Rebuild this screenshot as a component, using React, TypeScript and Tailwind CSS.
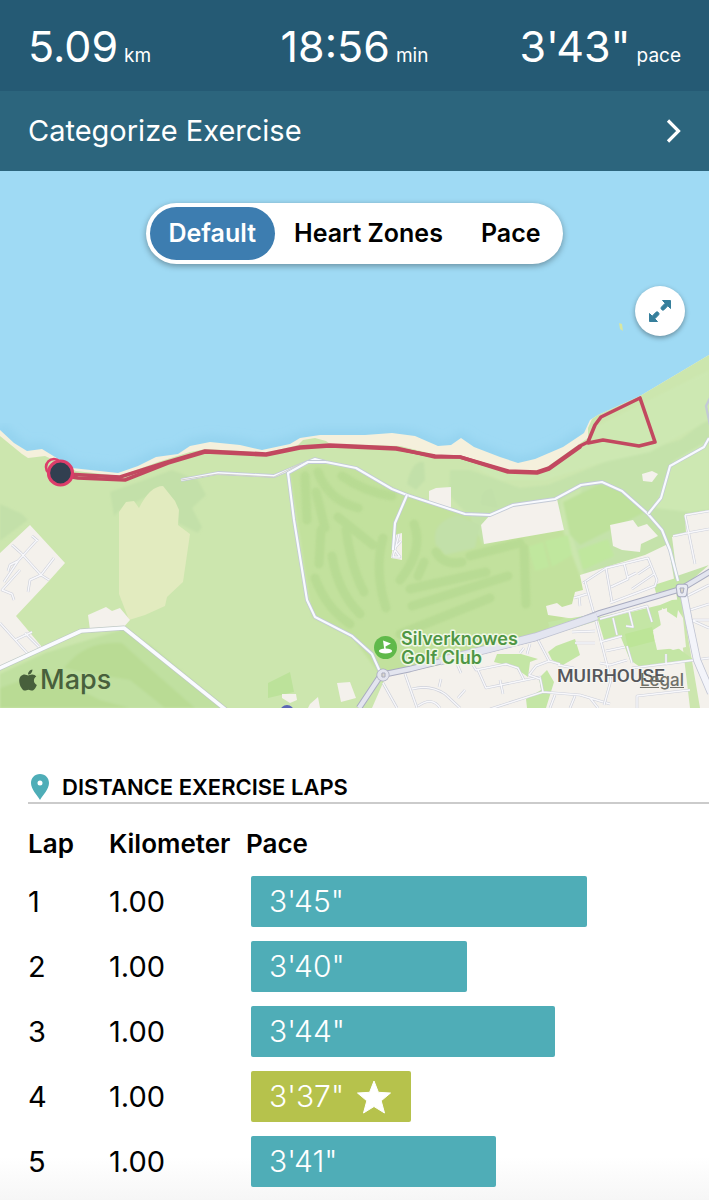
import React, { useState } from "react";
import { FaApple } from "react-icons/fa";

const stats = [
  { value: "5.09", unit: "km" },
  { value: "18:56", unit: "min" },
  { value: "3'43\"", unit: "pace" },
];

const laps = [
  { lap: 1, km: "1.00", pace: "3'45\"", share: 73.4, best: false },
  { lap: 2, km: "1.00", pace: "3'40\"", share: 47.2, best: false },
  { lap: 3, km: "1.00", pace: "3'44\"", share: 66.3, best: false },
  { lap: 4, km: "1.00", pace: "3'37\"", share: 35, best: true },
  { lap: 5, km: "1.00", pace: "3'41\"", share: 53.6, best: false },
];

const modes = ["Default", "Heart Zones", "Pace"];

const fairways = [
  "M305 476L307 520",
  "M316 492L325 528",
  "M318 472Q328 500 358 508",
  "M342 476Q365 492 392 496",
  "M338 517L373 545",
  "M346 530Q352 570 364 592",
  "M321 530L319 564",
  "M332 556Q338 592 360 614",
  "M315 578Q326 608 350 624",
  "M383 538Q374 570 386 608",
  "M414 524Q424 550 400 580",
  "M424 562L418 576",
  "M410 589L486 572",
  "M412 606L508 576",
  "M400 634Q430 622 490 598",
  "M436 552Q444 566 462 562",
  "M470 556L520 543",
  "M524 548L526 604",
];

const minorRoads = [
  "M37 540L18 561L4 582M12 545L21 553L41 575L49 580M18 561L10 565L8 571M54 558L41 575L30 580L28 592M20 570L2 590L12 594L14 600M32 536L38 541",
  "M0 623L28 654M15 640L32 632M25 633L39 647",
  "M399 534L393 557L400 557L394 549L401 541",
  "M405 674L417 708M383 683L397 708",
  "M412 689Q430 684 445 694L460 708M441 679L439 687M465 690L458 698M453 655L461 673M418 706Q432 696 440 708",
  "M478 670L486 688L540 677L543 692L490 709M500 680L503 694M470 660L476 670L506 664L518 668L524 680M543 692L580 695L610 704M555 695L550 708M575 696L570 708M590 698L598 708",
  "M536 636L549 661L536 666L529 675L540 679M549 661L560 664M558 665L574 668",
  "M595 617L606 661L611 680L604 705M600 642L622 636M600 663L610 665L627 660",
  "M613 618L617 635M600 619L647 606L652 622M629 611L633 627L626 626M575 643H595M572 632L595 631M627 646L632 663M606 651L625 647M666 654V664L709 658M632 668L694 660",
  "M583 583L606 568L648 558L657 580L655 586L610 603M606 568L612 602M624 563L628 579L611 587M654 574L632 589M650 566L638 574M628 577L636 573",
  "M585 581L594 614M574 598L587 594M579 596L580 606",
  "M673 536L687 533M685 515L695 564M685 515L709 511M687 533L709 529",
  "M687 596L709 585M690 610L709 604M693 620L709 620M691 620L709 628",
  "M524 648L520 653M530 644L527 654",
  "M637 708V696L690 690",
];

const coastRoad =
  "M181 480L218 473L274 476L315 459L326 462L356 468L392 489L407 495L465 514L490 515L513 505L555 499L581 485L602 482L622 491L648 514L662 530L670 550L678 581";
const clubRoad = "M326 462H308L288 473L294 520L307 600L315 617L352 636L372 654L381 674";
const linkRoads = "M407 495L395 523L393 550M648 514L661 498L670 466L704 447L709 438";
const westRoad = "M-2 669L81 631L124 628L226 710";
const mainRoad = "M359 708L381 675L410 669L535 638L600 613L681 589L711 571";
const southRoad = "M683 591L689 622L697 660L711 693";

function RouteMap() {
  return (
    <svg
      viewBox="0 171 709 537"
      preserveAspectRatio="xMidYMid slice"
      className="block h-[537px] w-full"
      role="img"
      aria-label="Route map"
    >
      <defs>
        <filter id="soft" x="-10%" y="-10%" width="120%" height="120%">
          <feGaussianBlur stdDeviation="1.2" />
        </filter>
        <filter id="wide" x="-10%" y="-10%" width="120%" height="120%">
          <feGaussianBlur stdDeviation="5" />
        </filter>
        <clipPath id="land">
          <path d="M0 436L22 454L28 458L45 456L58 462L76 471L120 476L158 462L190 452L206 449L240 451L266 453L298 445L303 440L315 438L326 441L330 444L400 446L437 455L465 459L510 471L540 472L588 438L588 428L592 419L598 415L640 396L709 355V708H0Z" />
        </clipPath>
      </defs>
      <rect y="171" width="709" height="537" fill="#9fdaf4" />
      <path
        d="M0 428L14 441L27 450L42 448L55 456L72 467L118 472L138 465L156 456L178 453L190 445L210 441L240 444L262 449L290 443L300 438L320 435L365 435L392 433L415 436L438 446L451 445L461 438L474 447L500 457L518 463L535 459L563 447L584 433"
        fill="none"
        stroke="#93d2ee"
        strokeWidth="10"
        filter="url(#wide)"
      />
      <path
        d="M0 430L14 443L27 451L42 449L55 457L72 468L118 473L138 466L156 457L178 454L190 446L210 442L240 445L262 450L290 444L300 438L320 435L365 435L392 433L415 436L438 446L451 445L461 438L474 447L500 457L518 463L535 459L563 447L584 433L590 420L598 415L640 396L709 355V708H0Z"
        fill="#f5f0dc"
      />
      <g clipPath="url(#land)">
        <rect y="340" width="709" height="370" fill="#cce6ae" />
        <g filter="url(#soft)">
          <path d="M110 492L150 478L172 470L198 480L206 495L192 508L202 527L198 533L178 523L160 490L120 510L114 516Z" fill="#c3e0a9" />
          <path d="M0 504L22 514L28 520L0 541Z" fill="#c3e0a9" />
          <path d="M450 470L470 470L520 488L548 485L610 460L680 440L709 418V600H400L470 517L449 495Z" fill="#c4e2aa" />
          <path d="M590 430L709 370V420L650 452L600 463L545 480L500 480L470 465L540 473Z" fill="#cde8b2" />
          <path d="M672 462L709 440V510L690 512L655 508Z" fill="#cde8b2" />
          <path d="M560 500L582 487L572 535L592 600L566 600Z" fill="#cbe6ae" />
          <path d="M290 473L315 462L358 469L395 489L470 517L483 545L520 535L562 528L590 602L530 640L400 674L378 672L352 637L312 617Z" fill="#c2e19d" />
          <path d="M407 484Q412 460 424 462L425 480L416 490ZM481 505Q480 490 492 488L498 508ZM436 545Q430 522 458 515L480 525L475 548L445 555Z" fill="#c2e0a9" />
          <path d="M563 502L600 484L622 490L645 512L610 530L580 545L570 535Z" fill="#bee19b" />
          <path d="M578 550L608 539L614 556L583 570Z" fill="#c0e79e" />
          <path d="M528 547L543 542L549 567L535 571ZM545 541L568 535L572 555L552 567Z" fill="#c0e79e" />
          <path d="M0 674L45 653L124 629L150 645L225 708H0Z" fill="#c0e0a0" />
          <path d="M64 668Q85 640 122 643L145 664L195 708H165L130 680L80 672ZM0 688L45 672L100 700L130 708H0Z" fill="#b9db94" />
        </g>
        <g
          fill="none"
          stroke="#b5d991"
          strokeWidth="9"
          strokeLinecap="round"
          filter="url(#soft)"
          opacity="0.75"
        >
          {fairways.map((d) => (
            <path key={d} d={d} />
          ))}
        </g>
        <path d="M119 512L126 502L134 501L139 508Q150 486 163 486L175 501L179 510L178 525L190 534L183 582L167 597L165 606L145 615L129 620L119 594Z" fill="#e2ebbf" />
        <path d="M268 683L290 672L294 692L268 698Z" fill="#bce29a" />
        <g fill="#f4f1ec">
          <path d="M0 553L30 525L65 563L48 582L16 616L42 647L0 670Z" />
          <path d="M88 615L106 607L112 611L120 608L130 620L122 629L90 630Z" />
          <path d="M429 491L436 488L451 487V508L429 501Z" />
          <path d="M481 525L491 514L518 504L557 499L564 530L484 544Z" />
          <path d="M610 525L633 520L638 527L647 524L658 536L641 544L640 552L622 550L613 546Z" />
          <path d="M642 474L652 471L658 474L652 482L643 481Z" />
          <path d="M395 535L402 533V560L391 558Z" />
          <path d="M337 683L350 682L356 698L341 702ZM282 694H296L297 700L290 703L282 698ZM310 704L318 697L320 708H308Z" />
          <path d="M386 676L440 665L535 640L600 620L640 608L600 617L575 619L548 615L546 606L557 603L562 607L572 604L575 592L583 590L580 575L606 567L645 555L668 544L676 590L690 708H372Z" />
          <path d="M672 537L686 533L685 515L709 510V708H700L680 590L709 565L677 576Z" />
        </g>
        <g fill="#c4e6a5">
          <path d="M556 646L575 639L580 655L563 665L552 660L548 652Z" />
          <path d="M494 662L497 654L521 654L538 659L530 662L528 677L514 667Z" />
          <path d="M547 670L554 682L546 708H527L526 699L541 690L539 678Z" />
          <path d="M598 620L660 605L672 600L685 599L680 620L662 608L660 635L653 632L657 650L678 648L694 660L640 667L630 660L620 635L604 640Z" />
          <path d="M654 585L679 577L680 588L656 593Z" />
          <path d="M548 622L590 615L592 618L550 629Z" />
        </g>
        <path d="M625 634L652 627L655 641L628 648Z" fill="#bde598" />
        <path d="M658 611L667 608V622L676 624L678 610L683 618L686 647L673 650L655 642L653 630L661 625Z" fill="#f4f1ec" />
        <g fill="none" strokeLinejoin="round">
          {minorRoads.map((d) => (
            <g key={d}>
              <path d={d} stroke="#cdd0da" strokeWidth="2.600" />
              <path d={d} stroke="#f8f8fb" strokeWidth="1.400" />
            </g>
          ))}
          <path d={coastRoad} stroke="#c3cad6" strokeWidth="3.800" />
          <path d={coastRoad} stroke="#f8faff" strokeWidth="2.200" />
          <path d={clubRoad} stroke="#c3cad6" strokeWidth="3.800" />
          <path d={clubRoad} stroke="#f8faff" strokeWidth="2.200" />
          <path d="M181 480L218 474L274 477L300 464" stroke="#cfcec8" strokeWidth="1" />
          <path d={linkRoads} stroke="#c3cad6" strokeWidth="3.600" />
          <path d={linkRoads} stroke="#f8faff" strokeWidth="2.200" />
          <path d="M710 398L706 406L710 425" stroke="#c3cad6" strokeWidth="2.400" />
          <path d={westRoad} stroke="#bfc9c6" strokeWidth="5" />
          <path d={westRoad} stroke="#fafbff" strokeWidth="3.600" />
          <path d={mainRoad} stroke="#a9acc0" strokeWidth="6.400" />
          <path d={mainRoad} stroke="#e3e5ef" strokeWidth="4.400" />
          <path d="M440 661L535 637L597 616" stroke="#bfc2d2" strokeWidth="8.600" />
          <path d="M440 661L535 637L597 616" stroke="#e3e5f0" strokeWidth="7" />
          <path d={southRoad} stroke="#c0c4d2" strokeWidth="8" />
          <path d={southRoad} stroke="#f3f4fa" strokeWidth="6.400" />
          <path d="M679 587H685L684 594H680Z" fill="#dad7cc" stroke="#a9acc0" strokeWidth="6.600" />
          <path d="M679 587H685L684 594H680Z" fill="#dad7cc" stroke="#e9ebf3" strokeWidth="4.600" />
          <path d="M680 588H684L683 593H681Z" fill="#dad7cc" stroke="#a9acc0" strokeWidth="1" />
          <circle cx="383" cy="675" r="4" fill="#dad7cc" stroke="#a9acc0" strokeWidth="5" />
          <circle cx="383" cy="675" r="4" fill="#dad7cc" stroke="#e3e5ef" strokeWidth="3.600" />
          <path d="M382 673H385V677H382Z" fill="#dad7cc" stroke="#a9acc0" strokeWidth="1" />
        </g>
        <circle cx="287" cy="712" r="7" fill="#5b66b5" />
      </g>
      <path d="M619 323L622 324L623 331L620 329Z" fill="#d7e7a2" />
      <g fill="none" stroke="#c24860" strokeLinejoin="round" strokeLinecap="round">
        <path d="M66 474L120 477L164 463L205 451L266 454L300 447L330 445L396 448L435 457L460 457L508 471L537 472L549 468L580 446L588 442L595 425L601 417L640 398L655 442L639 446L603 440L588 443" strokeWidth="3.600" />
        <path d="M66 476L78 478L125 480L168 463L205 452L266 455L300 448L330 446L396 449L435 456L460 457L508 472L537 473L549 469L580 447" strokeWidth="3.600" />
        <circle cx="54" cy="467" r="8" stroke="#dc3d6a" strokeWidth="2.600" />
      </g>
      <circle cx="60.500" cy="473" r="12" fill="#313f50" stroke="#dc3d6a" strokeWidth="3.200" />
      <circle cx="385.500" cy="647.500" r="11.500" fill="#60b94a" />
      <ellipse cx="385.500" cy="651" rx="6.600" ry="2.500" fill="#fff" />
      <path d="M383 640.500L391 643.500L385.500 646.500L386 651H384.500Z" fill="#fff" />
      <g
        fill="#4f9645"
        stroke="#f0f8e6"
        strokeWidth="3"
        strokeLinejoin="round"
        className="font-['Inter',sans-serif] text-[18px] font-semibold [paint-order:stroke]"
      >
        <text x="401" y="645">Silverknowes</text>
        <text x="401" y="664">Golf Club</text>
      </g>
      <text
        x="557"
        y="682"
        fill="#56575c"
        stroke="#f8f7f3"
        strokeWidth="2"
        className="font-['Roboto',sans-serif] text-[19px] font-medium [paint-order:stroke]"
      >
        MUIRHOUSE
      </text>
    </svg>
  );
}

export default function App() {
  const [mode, setMode] = useState("Default");

  return (
    <main className="min-h-screen bg-white font-['Inter',sans-serif] text-black">
      <header className="text-white">
        <dl className="grid h-[91px] grid-cols-[1fr_auto_1fr] items-center bg-[#255a74] px-7">
          {stats.map((s) => (
            <div key={s.unit} className="flex items-baseline gap-1.5 last:justify-end">
              <dd className="text-[43px] leading-[46px]">{s.value}</dd>
              <dt className="order-last text-[19px] leading-none">{s.unit}</dt>
            </div>
          ))}
        </dl>
        <button type="button" className="flex h-20 w-full items-center justify-between bg-[#2c657d] px-7 text-[29px]">
          Categorize Exercise
          <svg viewBox="0 0 16 24" className="h-6 w-4" fill="none" stroke="currentColor" strokeWidth="3.200" aria-hidden="true">
            <path d="M3 1.500L13.500 12L3 22.500" />
          </svg>
        </button>
      </header>

      <section className="relative" aria-label="Map">
        <RouteMap />
        <div className="absolute inset-x-0 top-8 flex justify-center">
          <div className="flex h-[61px] items-center rounded-full bg-white p-1 shadow-[0_2px_6px_rgba(0,0,0,0.35)]">
            {modes.map((m) => (
              <button
                key={m}
                type="button"
                aria-pressed={m === mode}
                onClick={() => setMode(m)}
                className={
                  m === mode
                    ? "h-full rounded-full bg-[#3d7db0] px-[19px] text-[25px] font-semibold text-white"
                    : "h-full rounded-full px-[19px] text-[25px] font-semibold text-black"
                }
              >
                {m}
              </button>
            ))}
          </div>
        </div>
        <button
          type="button"
          aria-label="Expand map"
          className="absolute right-6 top-[115px] flex size-[50px] items-center justify-center rounded-full bg-white shadow-[0_2px_5px_rgba(0,0,0,0.35)]"
        >
          <svg viewBox="0 0 24 24" className="size-6 text-[#367f9c]" aria-hidden="true">
            <path
              d="M14.500 1.500H22.500V9.500L19.800 6.800L16 10.800Q14.800 11.700 13.700 10.600Q12.500 9.400 13.300 8.200L17.200 4.200ZM9.500 22.500H1.500V14.500L4.200 17.200L8 13.200Q9.200 12.300 10.300 13.400Q11.500 14.600 10.700 15.800L6.800 19.800Z"
              fill="currentColor"
              stroke="currentColor"
              strokeLinejoin="round"
            />
          </svg>
        </button>
        <div className="absolute bottom-3 left-4 flex items-center text-[#48603c]">
          <FaApple className="size-6" aria-hidden="true" />
          <span className="text-[27px] font-medium leading-8">Maps</span>
        </div>
        <a href="#legal" className="absolute bottom-4 right-[25px] text-[17px] font-medium leading-6 text-[#707068] underline">
          Legal
        </a>
      </section>

      <section className="bg-[linear-gradient(to_top,#f6f6f6,#ffffff_44px)] pb-[7px] pt-16">
        <div className="ml-7 flex h-8 items-center gap-2.5 border-b-2 border-[#cbcbcb]">
          <svg viewBox="0 0 24 26" className="h-[26px] w-6" aria-hidden="true">
            <path d="M12 0C6.500 0 3 4 3 9C3 15 9 21 12 26C15 21 21 15 21 9C21 4 17.500 0 12 0ZM12 6.500A2.500 2.500 0 1 1 12 11.500A2.500 2.500 0 1 1 12 6.500Z" fill="#4eadb7" fillRule="evenodd" />
          </svg>
          <h2 className="text-[22px] font-semibold">DISTANCE EXERCISE LAPS</h2>
        </div>
        <table className="w-full table-fixed border-collapse text-left">
          <colgroup>
            <col className="w-[109px]" />
            <col className="w-[137px]" />
            <col />
          </colgroup>
          <thead>
            <tr className="h-[65px] text-[26px]">
              <th scope="col" className="pl-7 pt-3.5 font-semibold">Lap</th>
              <th scope="col" className="pt-3.5 font-semibold">Kilometer</th>
              <th scope="col" className="pt-3.5 font-semibold">Pace</th>
            </tr>
          </thead>
          <tbody>
            {laps.map((l) => (
              <tr key={l.lap} className="h-[65px] text-[29px]">
                <td className="pl-7">{l.lap}</td>
                <td>{l.km}</td>
                <td className="pl-[5px]">
                  <div
                    style={{ width: `${l.share}%` }}
                    className={
                      l.best
                        ? "flex h-[51px] items-center gap-3 rounded-xs bg-[#b6c24c] pl-[18px] text-[30px] font-light text-white"
                        : "flex h-[51px] items-center rounded-xs bg-[#4fadb7] pl-[18px] text-[30px] font-light text-white"
                    }
                  >
                    {l.pace}
                    {l.best && (
                      <svg viewBox="0 0 36 34" className="h-[34px] w-9" role="img" aria-label="Fastest lap">
                        <path d="M18 1L22.400 12.300L34.500 13L25.200 20.800L28.500 33L18 26.500L7.500 33L10.800 20.800L1.500 13L13.600 12.300Z" fill="#fff" stroke="#fff" strokeLinejoin="round" />
                      </svg>
                    )}
                  </div>
                </td>
              </tr>
            ))}
          </tbody>
        </table>
      </section>
    </main>
  );
}
